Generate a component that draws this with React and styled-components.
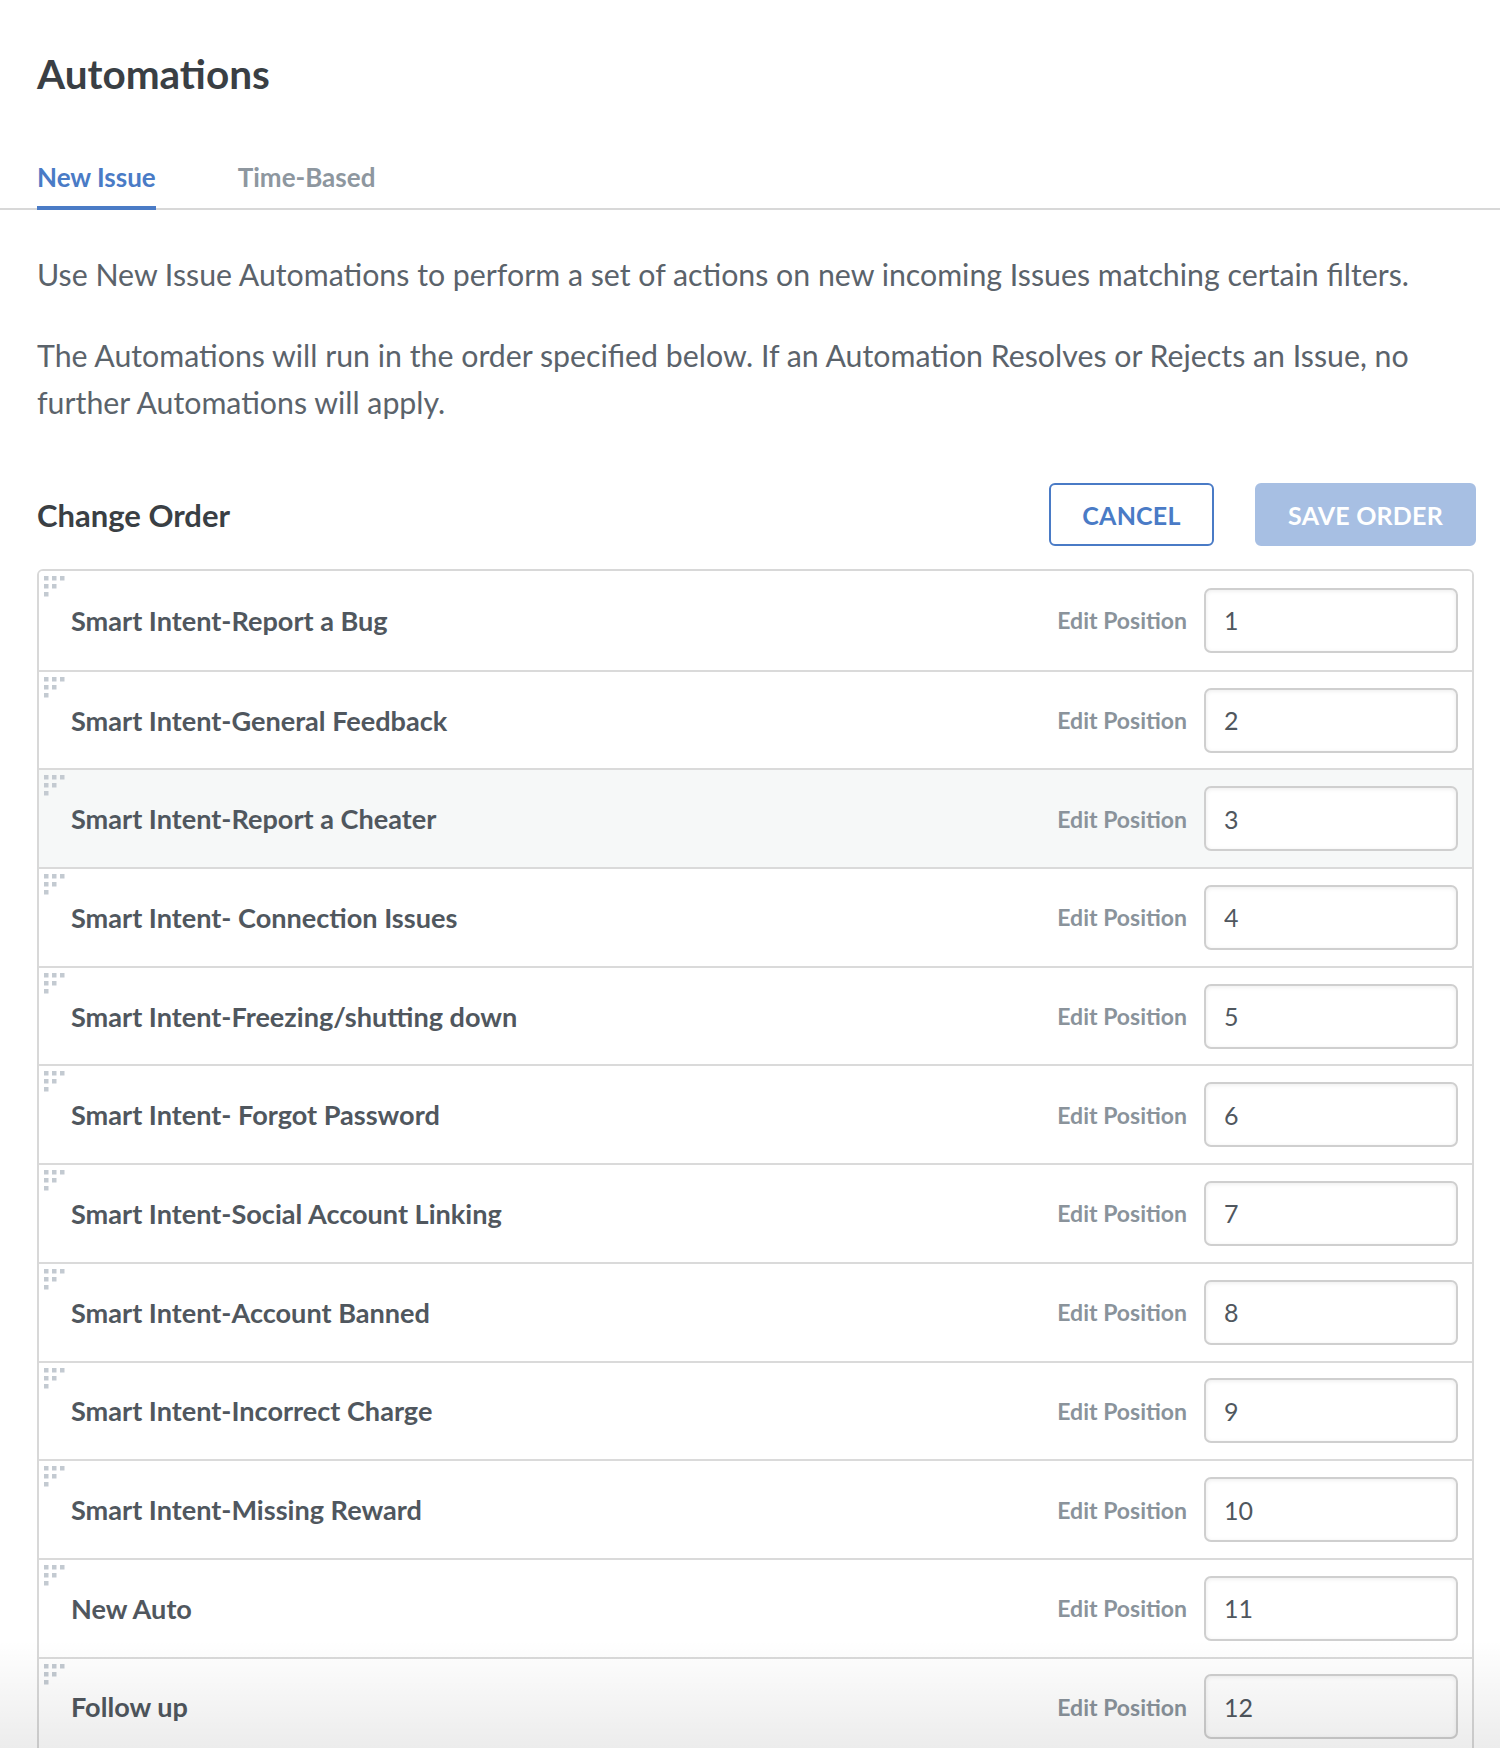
import React from "react";
import styled, { createGlobalStyle } from "styled-components";

const Global = createGlobalStyle`
  html, body { margin: 0; padding: 0; background: #fff; }
  body { font-family: Lato, "Open Sans", sans-serif; -webkit-font-smoothing: antialiased; }
  * { box-sizing: border-box; }
`;

const Page = styled.div`
  position: relative;
  min-height: 1748px;
  background: #fff;
`;

const Header = styled.div`
  padding: 44px 37px 0;
`;

const Title = styled.h1`
  margin: 0;
  font-size: 40.5px;
  line-height: 60px;
  font-weight: 700;
  color: #3a3f44;
`;

const TabBar = styled.div`
  display: flex;
  gap: 82px;
  padding: 0 37px;
  margin-top: 53px;
  border-bottom: 2px solid #d8d8d8;
`;

const Tab = styled.div`
  font-size: 26px;
  font-weight: 700;
  line-height: 40px;
  padding-bottom: 9px;
  margin-bottom: -2px;
  color: ${(p) => (p.$active ? "#4a7bc6" : "#8e979f")};
  border-bottom: 4px solid ${(p) => (p.$active ? "#4a7bc6" : "transparent")};
`;

const Content = styled.div`
  padding: 0 26px 0 37px;
`;

const Para = styled.p`
  margin: ${(p) => p.$mt || "0"} 0 0;
  font-size: 30.3px;
  line-height: 47px;
  color: #5b636b;
  max-width: 1420px;
`;

const OrderBar = styled.div`
  display: flex;
  align-items: center;
  justify-content: space-between;
  margin-top: 57px;
`;

const SubTitle = styled.h2`
  margin: 0;
  font-size: 31px;
  font-weight: 700;
  color: #3a3f44;
`;

const Buttons = styled.div`
  display: flex;
  gap: 41px;
  margin-right: -2px;
`;

const Button = styled.button`
  height: 63px;
  padding: 0;
  width: ${(p) => (p.$primary ? "221px" : "165px")};
  border-radius: 6px;
  font-family: inherit;
  font-size: 25px;
  font-weight: 700;
  letter-spacing: 0.2px;
  cursor: pointer;
  border: 2px solid ${(p) => (p.$primary ? "#a7bfe3" : "#4a7bc6")};
  background: ${(p) => (p.$primary ? "#a7bfe3" : "#fff")};
  color: ${(p) => (p.$primary ? "#fff" : "#4a7bc6")};
`;

const List = styled.div`
  margin-top: 23px;
  border: 2px solid #d8d8d8;
  border-radius: 6px;
  overflow: hidden;
`;

const Row = styled.div`
  position: relative;
  display: flex;
  align-items: center;
  height: 98.7px;
  padding: 0 14px 0 32px;
  background: ${(p) => (p.$hover ? "#f6f8f8" : "#fff")};
  border-top: ${(p) => (p.$first ? "none" : "2px solid #dadada")};
`;

const Handle = styled.svg`
  position: absolute;
  left: 5px;
  top: 5px;
`;

const Name = styled.div`
  flex: 1;
  font-size: 27.1px;
  font-weight: 700;
  color: #50575e;
`;

const EditLabel = styled.span`
  font-size: 23px;
  font-weight: 700;
  color: #8a939b;
  margin-right: 17px;
`;

const PosInput = styled.input`
  width: 254px;
  height: 65px;
  border: 2px solid #cfcfcf;
  border-radius: 7px;
  padding: 0 18px;
  font-family: inherit;
  font-size: 25px;
  color: #50575e;
  background: #fff;
  box-shadow: inset 0 1px 4px rgba(0, 0, 0, 0.08);
  outline: none;
`;

const BottomFade = styled.div`
  position: absolute;
  left: 0;
  right: 0;
  top: 1640px;
  height: 108px;
  pointer-events: none;
  background: linear-gradient(to bottom, rgba(0,0,0,0), rgba(0,0,0,0.075));
`;

const DragDots = () => (
  <Handle width="24" height="24" viewBox="0 0 24 24">
    {[
      [0, 0], [8, 0], [16, 0],
      [0, 8], [8, 8],
      [0, 16],
    ].map(([x, y], i) => (
      <rect key={i} x={x} y={y} width="4.5" height="4.5" fill="#c3cad1" />
    ))}
  </Handle>
);

const items = [
  "Smart Intent-Report a Bug",
  "Smart Intent-General Feedback",
  "Smart Intent-Report a Cheater",
  "Smart Intent- Connection Issues",
  "Smart Intent-Freezing/shutting down",
  "Smart Intent- Forgot Password",
  "Smart Intent-Social Account Linking",
  "Smart Intent-Account Banned",
  "Smart Intent-Incorrect Charge",
  "Smart Intent-Missing Reward",
  "New Auto",
  "Follow up",
];

export default function App() {
  return (
    <Page>
      <Global />
      <Header>
        <Title>Automations</Title>
      </Header>
      <TabBar>
        <Tab $active>New Issue</Tab>
        <Tab>Time-Based</Tab>
      </TabBar>
      <Content>
        <Para $mt="41px">
          Use New Issue Automations to perform a set of actions on new incoming Issues matching certain filters.
        </Para>
        <Para $mt="34px">
          The Automations will run in the order specified below. If an Automation Resolves or Rejects an Issue, no
          further Automations will apply.
        </Para>
        <OrderBar>
          <SubTitle>Change Order</SubTitle>
          <Buttons>
            <Button>CANCEL</Button>
            <Button $primary>SAVE ORDER</Button>
          </Buttons>
        </OrderBar>
        <List>
          {items.map((name, i) => (
            <Row key={i} $first={i === 0} $hover={i === 2}>
              <DragDots />
              <Name>{name}</Name>
              <EditLabel>Edit Position</EditLabel>
              <PosInput defaultValue={i + 1} />
            </Row>
          ))}
        </List>
      </Content>
      <BottomFade />
    </Page>
  );
}
